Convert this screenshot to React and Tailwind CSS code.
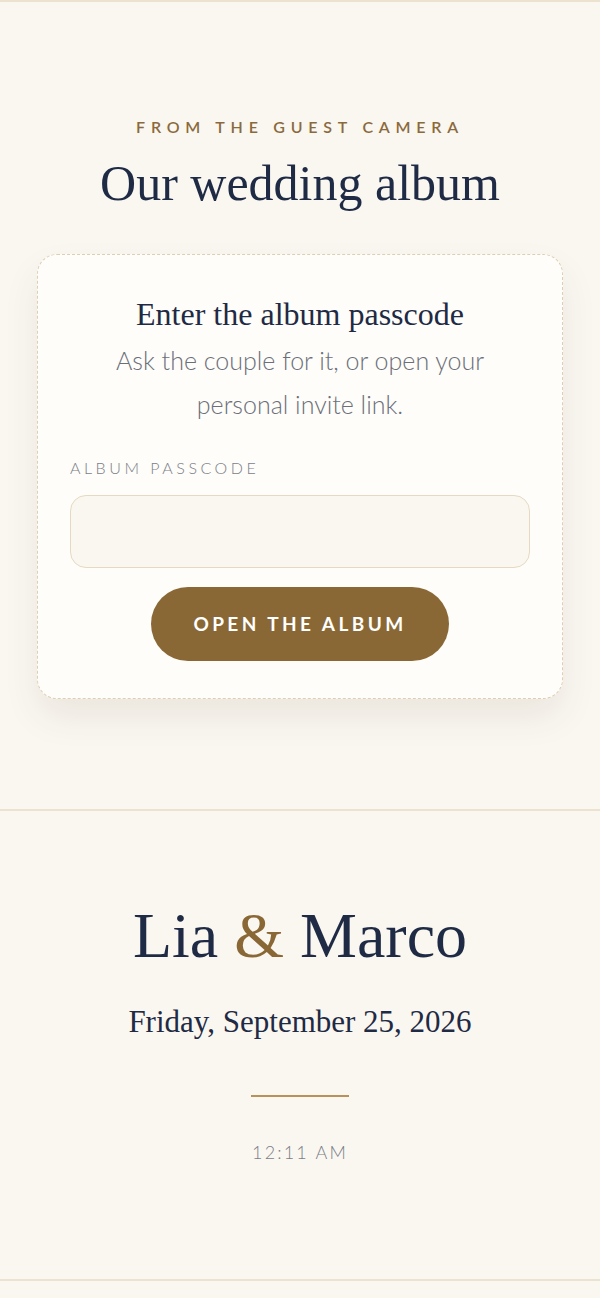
import React from 'react';

const AlbumGate = () => {
  return (
    <section className="border-t-2 border-[#ece2d0] px-[37px] pt-[113px] pb-[110px]">
      <p className="text-center font-['Lato','Open_Sans',sans-serif] text-[16px] font-semibold uppercase tracking-[0.36em] text-[#8a6a3c]">
        From the guest camera
      </p>
      <h1 className="mt-[17px] text-center font-['Liberation_Serif','DejaVu_Serif',serif] text-[50px] leading-[1.1] text-[#1f2a44]">
        Our wedding album
      </h1>

      <div className="mt-[43px] rounded-[20px] border border-dashed border-[#ddcfb4] bg-[#fefdf9] px-[32px] pt-[40px] pb-[37px] shadow-[0_18px_36px_rgba(60,40,10,0.08)]">
        <h2 className="text-center font-['Liberation_Serif','DejaVu_Serif',serif] text-[32px] leading-[1.2] text-[#1f2a44]">
          Enter the album passcode
        </h2>
        <p className="mt-[5px] text-center font-['Lato','Open_Sans',sans-serif] text-[25px] font-light leading-[44px] text-[#6b6f7a]">
          Ask the couple for it, or open your
          <br />
          personal invite link.
        </p>

        <label className="mt-[30px] block font-['Lato','Open_Sans',sans-serif] text-[16px] font-light uppercase tracking-[0.22em] text-[#7a7e88]">
          Album passcode
        </label>
        <input
          type="password"
          className="mt-[15px] block h-[73px] w-full rounded-[16px] border border-[#e6d9c2] bg-[#faf7f0] px-5 outline-none"
        />

        <div className="mt-[19px] flex justify-center">
          <button className="h-[74px] w-[298px] rounded-full bg-[#8a6836] font-['Lato','Open_Sans',sans-serif] text-[19px] font-bold uppercase tracking-[0.18em] text-white">
            Open the album
          </button>
        </div>
      </div>
    </section>
  );
};

const Couple = () => {
  return (
    <section className="border-y-2 border-[#ece2d0] pt-[90px] pb-[113px] text-center">
      <h2 className="font-['Liberation_Serif','DejaVu_Serif',serif] text-[64px] leading-[1.1] text-[#1f2a44]">
        Lia <span className="text-[#8a6836]">&amp;</span> Marco
      </h2>
      <p className="mt-[31px] font-['Liberation_Serif','DejaVu_Serif',serif] text-[31px] leading-[1.2] text-[#1f2a44]">
        Friday, September 25, 2026
      </p>
      <div className="mx-auto mt-[55px] h-[2px] w-[98px] bg-[#b8925a]" />
      <p className="mt-[42px] font-['Lato','Open_Sans',sans-serif] text-[18px] font-light tracking-[0.12em] text-[#7a7e88]">
        12:11 AM
      </p>
    </section>
  );
};

export default function App() {
  return (
    <div className="min-h-[1298px] bg-[#faf7f1]">
      <AlbumGate />
      <Couple />
    </div>
  );
}
